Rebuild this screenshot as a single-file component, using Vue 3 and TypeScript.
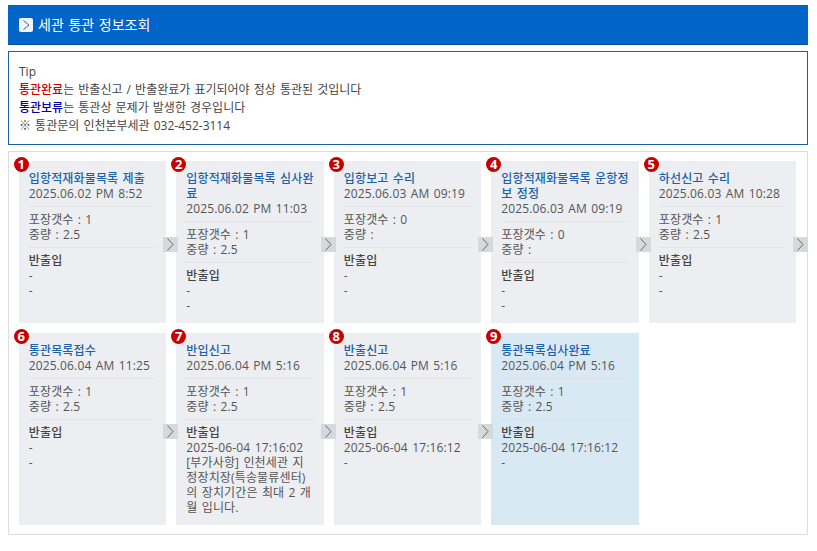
<script setup lang="ts">
interface Step {
  title: string
  date: string
  count: string
  weight: string
  lines: string[]
  done?: boolean
}

const steps: Step[] = [
  { title: '입항적재화물목록 제출', date: '2025.06.02 PM 8:52', count: '1', weight: '2.5', lines: ['-', '-'] },
  { title: '입항적재화물목록 심사완료', date: '2025.06.02 PM 11:03', count: '1', weight: '2.5', lines: ['-', '-'] },
  { title: '입항보고 수리', date: '2025.06.03 AM 09:19', count: '0', weight: '', lines: ['-', '-'] },
  { title: '입항적재화물목록 운항정보 정정', date: '2025.06.03 AM 09:19', count: '0', weight: '', lines: ['-', '-'] },
  { title: '하선신고 수리', date: '2025.06.03 AM 10:28', count: '1', weight: '2.5', lines: ['-', '-'] },
  { title: '통관목록접수', date: '2025.06.04 AM 11:25', count: '1', weight: '2.5', lines: ['-', '-'] },
  {
    title: '반입신고',
    date: '2025.06.04 PM 5:16',
    count: '1',
    weight: '2.5',
    lines: ['2025-06-04 17:16:02', '[부가사항] 인천세관 지정장치장(특송물류센터)의 장치기간은 최대 2 개월 입니다.'],
  },
  { title: '반출신고', date: '2025.06.04 PM 5:16', count: '1', weight: '2.5', lines: ['2025-06-04 17:16:12', '-'] },
  {
    title: '통관목록심사완료',
    date: '2025.06.04 PM 5:16',
    count: '1',
    weight: '2.5',
    lines: ['2025-06-04 17:16:12', '-'],
    done: true,
  },
]
</script>

<template>
  <div class="page">
    <h1 class="page__title">
      <svg class="page__title-icon" width="14" height="14" viewBox="0 0 14 14" aria-hidden="true">
        <rect width="14" height="14" rx="2" fill="#f1f5fa" />
        <path d="M4.5 2.5L10 7L4.5 11.5" fill="none" stroke="#2f66a6" stroke-width="1" />
      </svg>
      세관 통관 정보조회
    </h1>

    <div class="tip">
      <p>Tip</p>
      <p><strong class="tip__red">통관완료</strong>는 반출신고 / 반출완료가 표기되어야 정상 통관된 것입니다</p>
      <p><strong class="tip__blue">통관보류</strong>는 통관상 문제가 발생한 경우입니다</p>
      <p>※ 통관문의 인천본부세관 032-452-3114</p>
    </div>

    <ul class="steps">
      <li
        v-for="(step, index) in steps"
        :key="step.title"
        :class="['step', { 'is-done': step.done }]"
      >
        <span class="step__badge">{{ index + 1 }}</span>
        <div class="step__section">
          <div class="step__title">{{ step.title }}</div>
          <div>{{ step.date }}</div>
        </div>
        <div class="step__section step__section--mid">
          <div>포장갯수 : {{ step.count }}</div>
          <div>중량 : {{ step.weight }}</div>
        </div>
        <div class="step__section--last">
          <div class="step__label">반출입</div>
          <div v-for="(line, i) in step.lines" :key="i">{{ line }}</div>
        </div>
        <span v-if="!step.done" class="step__arrow">
          <svg width="7" height="13" viewBox="0 0 7 13" aria-hidden="true">
            <path d="M0.5 0.5L6 6.5L0.5 12.5" fill="none" stroke="#666b70" stroke-width="1" />
          </svg>
        </span>
      </li>
    </ul>
  </div>
</template>

<style>
body {
  background: #fff;
}
</style>

<style scoped>
.page {
  width: 800px;
  padding: 5px 0 0 8px;
  font-family: 'Open Sans', 'Noto Sans CJK KR', sans-serif;
  font-size: 12px;
  line-height: 15px;
  word-spacing: 1px;
  word-break: break-all;
  color: #555;
}

.page__title {
  display: flex;
  align-items: center;
  gap: 5px;
  height: 40px;
  margin: 0;
  padding-left: 11px;
  background-color: #0064c8;
  border-bottom: 1px solid #0a4f96;
  box-sizing: border-box;
  color: #fff;
  font-size: 14px;
  font-weight: 400;
}

.tip {
  margin-top: 6px;
  padding: 11px 10px 9px;
  border: 1px solid #1a5fa8;
  line-height: 18px;
  color: #444;
}

.tip p {
  margin: 0;
}

.tip strong {
  font-weight: 500;
}

.tip__red {
  color: #d40000;
}

.tip__blue {
  color: #0000b0;
}

.steps {
  display: grid;
  grid-template-columns: repeat(5, 147.5px);
  gap: 10px;
  margin: 6px 0 0;
  padding: 9px 10px 9px 9.75px;
  list-style: none;
  letter-spacing: 0.15px;
  border: 1px solid #ddd;
}

.step {
  position: relative;
  padding: 10px;
  background-color: #eceef2;
}

.step.is-done {
  background-color: #d9e9f4;
}

.step__badge {
  position: absolute;
  top: -4px;
  left: -5px;
  z-index: 2;
  width: 15px;
  height: 15px;
  border-radius: 50%;
  background-color: #c90000;
  color: #fff;
  font-size: 13px;
  font-weight: 700;
  line-height: 15px;
  text-align: center;
}

.step__section {
  padding-bottom: 5px;
  border-bottom: 1px dotted #dadbdf;
}

.step__section--mid {
  padding-top: 5px;
}

.step__section--last {
  padding-top: 5px;
}

.step__title {
  color: #1a62ab;
  font-weight: 500;
}

.step__label {
  color: #444;
  font-weight: 500;
}

.step__arrow {
  position: absolute;
  top: calc(50% - 5px);
  right: -12px;
  z-index: 1;
  display: flex;
  align-items: center;
  justify-content: center;
  width: 15px;
  height: 15px;
  background-color: #d6d9dc;
}
</style>
